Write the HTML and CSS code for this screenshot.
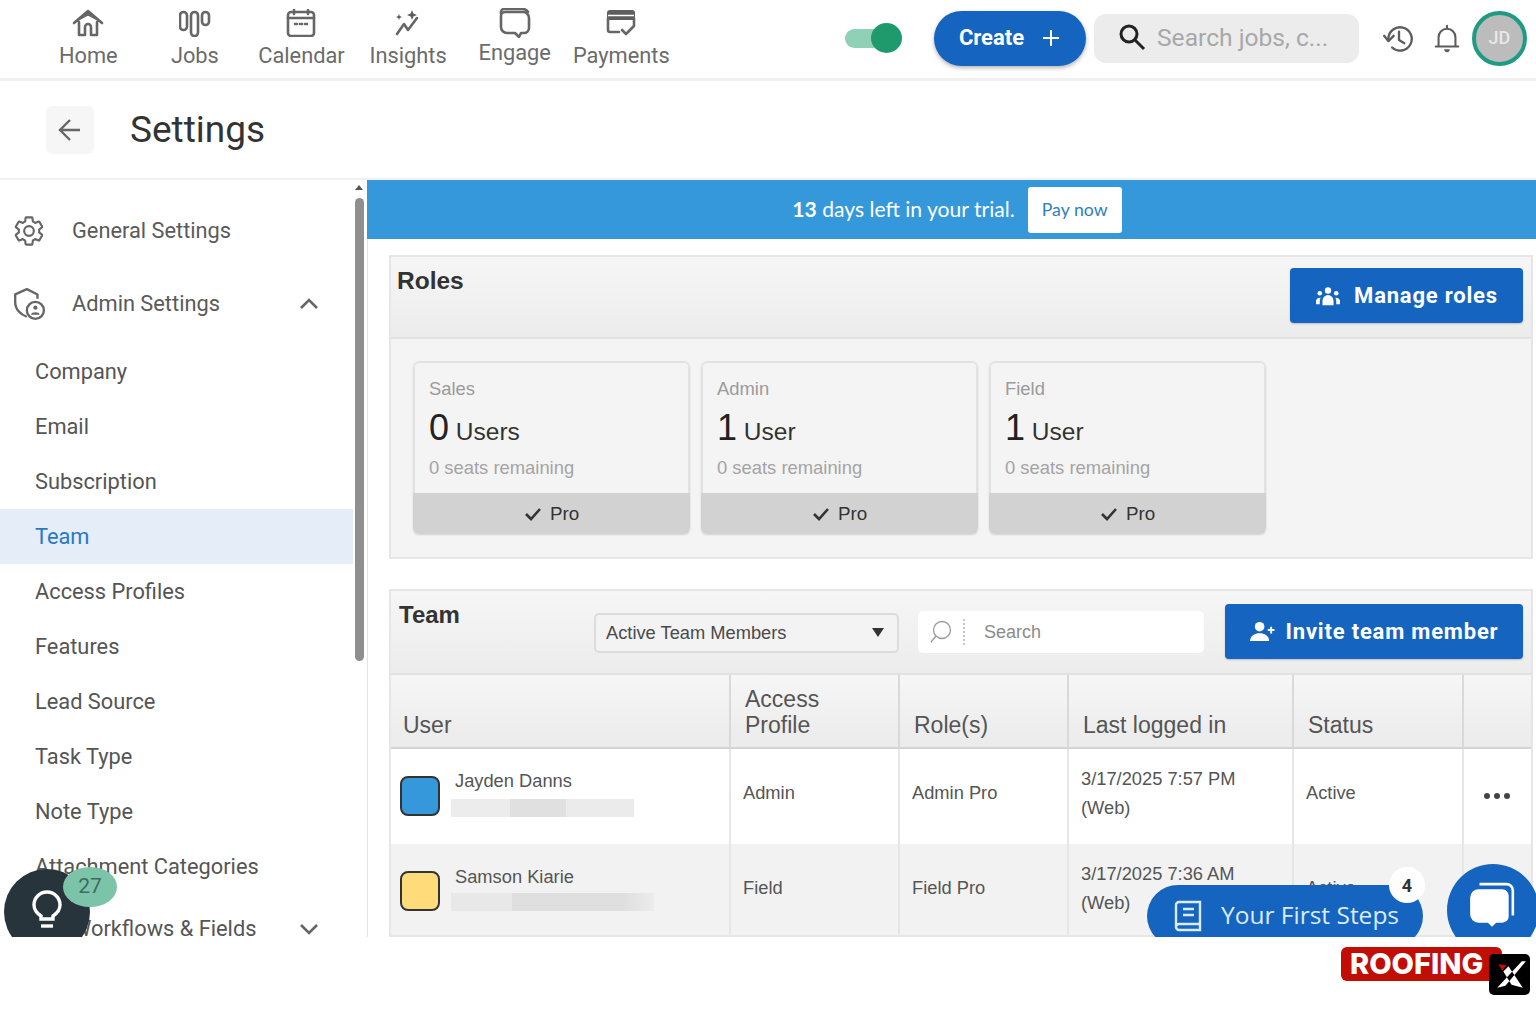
FILE: index.html
```html
<!DOCTYPE html>
<html lang="en">
<head>
<meta charset="utf-8">
<title>Settings</title>
<link rel="stylesheet" href="styles.css">
</head>
<body>
<div class="app">
  <header class="topbar">
    <nav class="nav">
      <a class="nav-item"><svg class="nav-icon" viewBox="0 0 32 28"><path d="M2 14 16 2l14 12M6 10.500 16 5l10 5.500M7 13v13h6v-8a3 3 0 0 1 6 0v8h6V13"/></svg><span>Home</span></a>
      <a class="nav-item"><svg class="nav-icon" viewBox="0 0 32 28"><rect x="1" y="3" width="7" height="18" rx="3.500"/><rect x="12" y="3" width="7" height="24" rx="3.500"/><rect x="23" y="3" width="7" height="13" rx="3.500"/></svg><span>Jobs</span></a>
      <a class="nav-item"><svg class="nav-icon" viewBox="0 0 32 28"><rect x="3" y="3" width="26" height="24" rx="3"/><path d="M3 9h26M9 1v4M23 1v4M10 15h2M15 15h2M20 15h2"/></svg><span>Calendar</span></a>
      <a class="nav-item"><svg class="nav-icon" viewBox="0 0 32 28"><path d="m5 25 7-10 4 6 9-12"/><path class="solid" d="m20 1 1.400 3.600L25 6l-3.600 1.400L20 11l-1.400-3.600L15 6l3.600-1.400zM7 5l.8 2L10 8l-2.200 1L7 11l-.8-2L4 8l2.200-1z"/></svg><span>Insights</span></a>
      <a class="nav-item nav-item-raised"><svg class="nav-icon nav-icon-tall" viewBox="0 0 34 30"><path d="M3 6V4a3 3 0 0 1 3-3h19a6 6 0 0 1 5 3"/><path d="M7 4h18a6 6 0 0 1 6 6v10a5 5 0 0 1-5 5h-3l-2 4-4-4H9a6 6 0 0 1-6-6V8a4 4 0 0 1 4-4z"/></svg><span>Engage</span></a>
      <a class="nav-item"><svg class="nav-icon" viewBox="0 0 32 28"><path class="solid" d="M5 1h22a3 3 0 0 1 3 3v7H2V4a3 3 0 0 1 3-3z"/><path d="M3 9v12a2 2 0 0 0 2 2h9M29 9v8M17 21l4 4 8-8"/><path class="gap" d="M3 6.500h26"/></svg><span>Payments</span></a>
    </nav>
    <div class="actions">
      <div class="toggle"><span class="toggle-knob"></span></div>
      <button class="create">Create<svg class="create-plus" viewBox="0 0 20 20"><path d="M10 2v16M2 10h16"/></svg></button>
      <div class="global-search">
        <svg class="search-glass" viewBox="0 0 28 28"><circle cx="11" cy="11" r="8"/><path d="m17 17 9 9"/></svg>
        <span>Search jobs, c...</span>
      </div>
      <svg class="tool-icon history" viewBox="0 0 32 32"><path d="M6 16a11 11 0 1 1 3.500 8"/><path d="M2 13l4 5 5-5M16 9v8l5 3"/></svg>
      <svg class="tool-icon bell" viewBox="0 0 32 32"><path d="M7 24V14a9 9 0 0 1 18 0v10zM4 24h24M16 2v3"/><path class="solid" d="M13 27h6a3 3 0 0 1-6 0z"/></svg>
      <div class="avatar">JD</div>
    </div>
  </header>

  <div class="titlebar">
    <button class="back"><svg viewBox="0 0 26 26"><path d="M23 13H4M13 3 3 13l10 10"/></svg></button>
    <h1>Settings</h1>
  </div>

  <div class="body">
    <aside class="sidebar">
      <div class="side-main">
        <svg class="side-icon" viewBox="0 0 24 24"><path d="M19.140 12.940c.04-.3.06-.61.06-.94 0-.32-.02-.64-.07-.94l2.030-1.580c.18-.14.23-.41.12-.61l-1.920-3.320c-.12-.22-.37-.29-.59-.22l-2.390.96c-.5-.38-1.030-.7-1.620-.94l-.36-2.540c-.04-.24-.24-.41-.48-.41h-3.840c-.24 0-.43.17-.47.41l-.36 2.540c-.59.24-1.130.57-1.620.94l-2.390-.96c-.22-.08-.47 0-.59.22L2.740 8.870c-.12.21-.08.47.12.61l2.030 1.580c-.05.3-.09.63-.09.94s.02.64.07.94l-2.030 1.580c-.18.14-.23.41-.12.61l1.920 3.320c.12.22.37.29.59.22l2.390-.96c.5.38 1.030.7 1.620.94l.36 2.540c.05.24.24.41.48.41h3.840c.24 0 .44-.17.47-.41l.36-2.540c.59-.24 1.130-.56 1.620-.94l2.390.96c.22.08.47 0 .59-.22l1.920-3.320c.12-.22.07-.47-.12-.61l-2.010-1.580z"/><circle cx="12" cy="12" r="3.400"/></svg>
        <span>General Settings</span>
      </div>
      <div class="side-main">
        <svg class="side-icon side-icon-admin" viewBox="0 0 32 32"><path d="M14 28C8 26 3 21 3 14V7l11-5 10 5v4"/><circle cx="22" cy="22" r="8"/><circle class="solid" cx="22" cy="19.500" r="2"/><path class="solid" d="M18 26c0-3 8-3 8 0z"/></svg>
        <span>Admin Settings</span>
        <svg class="chevron" viewBox="0 0 20 12"><path d="M2 10 10 2l8 8"/></svg>
      </div>
      <ul class="side-list">
        <li>Company</li>
        <li>Email</li>
        <li>Subscription</li>
        <li class="is-active">Team</li>
        <li>Access Profiles</li>
        <li>Features</li>
        <li>Lead Source</li>
        <li>Task Type</li>
        <li>Note Type</li>
        <li>Attachment Categories</li>
        <li class="side-group">Workflows &amp; Fields<svg class="chevron" viewBox="0 0 20 12"><path d="m2 2 8 8 8-8"/></svg></li>
      </ul>
    </aside>
    <div class="scrollbar"><span class="scroll-up"></span><span class="scroll-thumb"></span></div>

    <main class="content">
      <div class="trial"><span class="trial-text"><b>13</b> days left in your trial.</span><button class="pay">Pay now</button></div>
      <div class="panels">
        <section class="panel roles">
          <div class="panel-head">
            <h2>Roles</h2>
            <button class="primary manage"><svg viewBox="0 0 26 24"><circle cx="13" cy="6" r="3.500"/><path d="M7 22v-5a6 6 0 0 1 12 0v5z"/><circle cx="4" cy="9" r="2.500"/><path d="M0 21v-4a4 4 0 0 1 5-3 8 8 0 0 0-1 4v3z"/><circle cx="22" cy="9" r="2.500"/><path d="M26 21v-4a4 4 0 0 0-5-3 8 8 0 0 1 1 4v3z"/></svg>Manage roles</button>
          </div>
          <div class="role-cards">
            <article class="role-card">
              <div class="role-info">
                <div class="role-name">Sales</div>
                <div class="role-count"><span class="num">0</span> Users</div>
                <div class="role-seats">0 seats remaining</div>
              </div>
              <div class="role-plan"><svg viewBox="0 0 18 14"><path d="m2 7 5 5 9-10"/></svg>Pro</div>
            </article>
            <article class="role-card">
              <div class="role-info">
                <div class="role-name">Admin</div>
                <div class="role-count"><span class="num">1</span> User</div>
                <div class="role-seats">0 seats remaining</div>
              </div>
              <div class="role-plan"><svg viewBox="0 0 18 14"><path d="m2 7 5 5 9-10"/></svg>Pro</div>
            </article>
            <article class="role-card">
              <div class="role-info">
                <div class="role-name">Field</div>
                <div class="role-count"><span class="num">1</span> User</div>
                <div class="role-seats">0 seats remaining</div>
              </div>
              <div class="role-plan"><svg viewBox="0 0 18 14"><path d="m2 7 5 5 9-10"/></svg>Pro</div>
            </article>
          </div>
        </section>

        <section class="panel team">
          <div class="panel-head team-head">
            <h2>Team</h2>
            <div class="select">Active Team Members<span class="caret"></span></div>
            <div class="team-search">
              <svg viewBox="0 0 24 24"><circle cx="13" cy="10" r="8.500"/><path d="M7 16l-5 6"/></svg>
              <span class="divider"></span>
              <span class="team-search-field">Search</span>
            </div>
            <button class="primary invite"><svg viewBox="0 0 26 24"><circle cx="10" cy="7" r="5"/><path d="M0 22c0-11 20-11 20 0z"/><path d="M22 7v7M18.500 10.500h7" class="plus"/></svg>Invite team member</button>
          </div>
          <div class="table">
            <div class="row head">
              <div class="cell">User</div>
              <div class="cell">Access Profile</div>
              <div class="cell">Role(s)</div>
              <div class="cell">Last logged in</div>
              <div class="cell">Status</div>
              <div class="cell"></div>
            </div>
            <div class="row">
              <div class="cell user">
                <span class="swatch swatch-blue"></span>
                <div class="user-text"><div class="user-name">Jayden Danns</div><div class="blur blur-a"></div></div>
              </div>
              <div class="cell">Admin</div>
              <div class="cell">Admin Pro</div>
              <div class="cell">3/17/2025 7:57 PM<br>(Web)</div>
              <div class="cell">Active</div>
              <div class="cell more"><span></span><span></span><span></span></div>
            </div>
            <div class="row alt">
              <div class="cell user">
                <span class="swatch swatch-yellow"></span>
                <div class="user-text"><div class="user-name">Samson Kiarie</div><div class="blur blur-b"></div></div>
              </div>
              <div class="cell">Field</div>
              <div class="cell">Field Pro</div>
              <div class="cell">3/17/2025 7:36 AM<br>(Web)</div>
              <div class="cell">Active</div>
              <div class="cell more"><span></span><span></span><span></span></div>
            </div>
          </div>
        </section>
      </div>
    </main>
  </div>

  <div class="tips">
    <svg viewBox="0 0 32 44"><path d="M10 29v-3c-3-2-7-5-7-11a13 13 0 0 1 26 0c0 6-4 9-7 11v3z"/><path d="M10 36h12"/></svg>
  </div>
  <div class="tips-badge">27</div>
  <div class="steps">
    <svg viewBox="0 0 30 34"><path d="M3 28V5a3 3 0 0 1 3-3h21v28H6a3 3 0 0 1-3-3 3 3 0 0 1 3-3h21M10 9h11M10 15h11"/></svg>
    <span>Your First Steps</span>
  </div>
  <div class="steps-badge">4</div>
  <div class="chat">
    <svg viewBox="0 0 48 48"><path class="chat-back" d="M12 3h26a6 6 0 0 1 6 6v24"/><path class="solid" d="M11 8h23a6 6 0 0 1 6 6v20a6 6 0 0 1-6 6h-6l-4 4-4-4H11a8 8 0 0 1-8-8V16a8 8 0 0 1 8-8z"/></svg>
  </div>
</div>

<div class="mark">
  <span class="mark-text">ROOFING</span>
  <span class="mark-x"><svg viewBox="0 0 40 40"><path class="mark-red" d="m9 10 8 1-4 5z"/><path class="mark-white" d="M32 7 8 33l8-2 20-24zM14 17l5-5 14 21-11-3z"/></svg></span>
</div>
</body>
</html>
```
FILE: styles.css
```css
* { box-sizing: border-box; }
html, body { margin: 0; padding: 0; background: #fff; }
body { position: relative; width: 1536px; height: 1024px; overflow: hidden; font-family: Roboto, "Liberation Sans", sans-serif; color: #333; }
button { font-family: inherit; border: 0; padding: 0; }
h1, h2, ul { margin: 0; padding: 0; }

.app { position: relative; height: 937px; overflow: hidden; background: #fff; }

.topbar { display: flex; justify-content: space-between; height: 81px; border-bottom: 3px solid #f0f0f0; padding-left: 35px; }
.nav { display: flex; }
.nav-item { width: 106.6px; display: flex; flex-direction: column; align-items: center; padding-top: 9px; color: #6b6b6b; font-size: 21.800px; line-height: 26px; }
.nav-item span { margin-top: 6px; }
.nav-item-raised span { margin-top: 2px; }
.nav-item-raised { padding-top: 8px; }
.nav-icon { width: 32px; height: 28px; fill: none; stroke: #666; stroke-width: 2.600; stroke-linejoin: round; stroke-linecap: round; }
.nav-icon-tall { width: 34px; height: 30px; }
.nav-icon .solid { fill: #5e5e5e; stroke: none; }
.nav-icon .gap { stroke: #fff; stroke-width: 1.500; stroke-linecap: butt; }

.actions { display: flex; align-items: center; padding-right: 9px; padding-bottom: 1px; }
.toggle { position: relative; width: 45px; height: 19px; border-radius: 10px; background: #8fd1b6; margin-right: 44px; }
.toggle-knob { position: absolute; right: -12px; top: -6px; width: 31px; height: 30px; border-radius: 50%; background: #1f9a6c; }
.create { display: flex; align-items: center; justify-content: center; gap: 17px; width: 152px; height: 55px; padding-bottom: 2px; border-radius: 28px; background: #1464c0; color: #fff; font-size: 22px; font-weight: 700; box-shadow: 0 2px 4px rgba(0,0,0,.3); margin-right: 8px; }
.create-plus { width: 20px; height: 20px; fill: none; stroke: #fff; stroke-width: 2; }
.global-search { display: flex; align-items: center; gap: 11px; width: 265px; height: 49px; padding-bottom: 3px; border-radius: 12px; background: #ececec; padding-left: 24px; color: #a8a8a8; font-size: 24.600px; margin-right: 23px; }
.search-glass { width: 28px; height: 28px; fill: none; stroke: #222; stroke-width: 3; }
.tool-icon { fill: none; stroke: #5c5c5c; stroke-width: 2.200; stroke-linejoin: round; stroke-linecap: round; }
.tool-icon .solid { fill: #5c5c5c; stroke: none; }
.history { width: 34px; height: 34px; margin-right: 16px; }
.bell { width: 30px; height: 32px; margin-right: 10px; }
.avatar { display: flex; align-items: center; justify-content: center; width: 55px; height: 55px; padding-bottom: 2px; border-radius: 50%; border: 4px solid #1f9b84; background: #bcbcbc; color: #e8e8e8; font-size: 18px; font-weight: 500; }

.titlebar { display: flex; align-items: center; height: 99px; padding-left: 46px; border-bottom: 2px solid #f1f1f1; }
.back { display: flex; align-items: center; justify-content: center; width: 48px; height: 48px; border-radius: 6px; background: #f6f6f6; margin-right: 36px; }
.back svg { width: 26px; height: 26px; fill: none; stroke: #666; stroke-width: 2.400; }
h1 { font-size: 37px; font-weight: 400; color: #333; }

.body { display: flex; height: 757px; }
.sidebar { width: 353px; padding-top: 14px; flex: none; overflow: hidden; color: #555; }
.side-main { display: flex; align-items: center; position: relative; height: 73px; padding-left: 12px; font-size: 21.800px; color: #5a5a5a; }
.side-main span { margin-left: 26px; }
.side-icon { width: 34px; height: 34px; fill: none; stroke: #666; stroke-width: 1.500; stroke-linejoin: round; }
.side-icon-admin { stroke-width: 2.200; }
.side-icon .solid { fill: #666; stroke: none; }
.chevron { position: absolute; right: 34px; width: 20px; height: 12px; fill: none; stroke: #666; stroke-width: 2.600; }
.side-list { list-style: none; margin-top: 4px; }
.side-list li { position: relative; display: flex; align-items: center; height: 55px; padding-left: 35px; font-size: 21.800px; color: #555; }
.side-list li.is-active { background: #e4edf8; color: #2a78c4; }
.side-list li.side-group { margin-top: 6px; height: 57px; padding-left: 72px; }

.scrollbar { position: relative; width: 14px; flex: none; }
.scroll-up { position: absolute; left: 2px; top: 5px; border: 4px solid transparent; border-top: 0; border-bottom: 5px solid #555; }
.scroll-thumb { position: absolute; left: 2px; top: 18px; width: 9px; height: 463px; border-radius: 5px; background: #8f8f8f; }

.content { display: flex; flex-direction: column; flex: 1; min-width: 0; font-family: "Liberation Sans", Arial, sans-serif; }
.trial { display: flex; flex: none; align-items: center; justify-content: center; gap: 13px; height: 59px; background: #3498db; color: #fff; padding-left: 11px; }
.trial-text { font-family: Lato, "Open Sans", sans-serif; font-size: 21.100px; margin-bottom: 2px; }
.pay { width: 94px; height: 46px; border-radius: 3px; background: #fff; color: #2f7ec0; font-family: Lato, "Open Sans", sans-serif; font-size: 17.700px; }

.panels { display: flex; flex: 1; min-height: 0; flex-direction: column; gap: 30px; padding: 16px 3px 0 21px; border-left: 1px solid #e4e4e4; }
.panel { background: #f4f4f4; border: 2px solid #e6e6e6; }
.panel-head { display: flex; height: 82px; background: linear-gradient(#f6f6f6, #ececec); border-bottom: 2px solid #e2e2e2; position: relative; }
.panel-head h2 { font-size: 24.500px; font-weight: 700; color: #333; padding: 10px 0 0 6px; }
.primary { display: flex; align-items: center; justify-content: center; background: #1464c0; color: #fff; border-radius: 4px; font-family: Roboto, sans-serif; font-size: 22px; font-weight: 700; letter-spacing: .8px; box-shadow: 0 1px 2px rgba(0,0,0,.2); }
.primary svg { fill: #fff; stroke: none; }
.manage { position: absolute; right: 8px; top: 11px; width: 233px; height: 55px; gap: 13px; }
.manage svg { width: 26px; height: 22px; }
.invite { position: absolute; right: 8px; top: 13px; width: 298px; height: 55px; gap: 11px; }
.invite svg { width: 25px; height: 23px; }
.invite .plus { fill: none; stroke: #fff; stroke-width: 2; }

.roles { height: 304px; flex: none; }
.role-cards { display: flex; gap: 11px; padding: 22px 0 0 22px; }
.role-card { display: flex; flex-direction: column; width: 277px; height: 173px; border-radius: 6px; overflow: hidden; box-shadow: 0 1px 2px rgba(0,0,0,.14); }
.role-info { flex: 1; padding: 14px 14px 0; border: 2px solid #e2e2e2; border-bottom: 0; border-radius: 6px 6px 0 0; }
.role-name { font-size: 18.400px; line-height: 24px; color: #9b9b9b; }
.role-count { font-size: 24.500px; line-height: 42px; margin-top: 6px; color: #333; }
.role-count .num { font-size: 36px; color: #222; }
.role-seats { font-size: 18.400px; line-height: 24px; margin-top: 3px; color: #a4a4a4; }
.role-plan { display: flex; align-items: center; justify-content: center; gap: 8px; height: 41px; background: #d2d2d2; font-size: 18.800px; color: #333; }
.role-plan svg { width: 18px; height: 14px; fill: none; stroke: #333; stroke-width: 2.600; }

.team { flex: 1; min-height: 0; overflow: hidden; }
.team-head { height: 84px; padding-left: 8px; }
.team-head h2 { font-size: 24px; padding: 10px 0 0 0; width: 195px; flex: none; }
.select { position: relative; display: flex; align-items: center; width: 305px; height: 40px; margin-top: 22px; padding-left: 10px; border: 2px solid #dcdcdc; border-radius: 5px; background: #f3f3f3; font-size: 18.300px; color: #4a4a4a; flex: none; }
.caret { position: absolute; right: 13px; top: 13px; border: 6px solid transparent; border-top: 9px solid #333; border-bottom: 0; }
.team-search { display: flex; align-items: center; width: 286px; height: 42px; margin: 20px 0 0 19px; background: #fff; border-radius: 5px; overflow: hidden; flex: none; }
.team-search svg { width: 24px; height: 24px; margin-left: 11px; fill: none; stroke: #9a9a9a; stroke-width: 1.300; }
.divider { width: 0; height: 26px; margin-left: 10px; border-left: 2px dotted #c4c4c4; }
.team-search-field { margin-left: 19px; font-size: 18px; color: #8b8b8b; }

.table { display: flex; flex-direction: column; }
.row { display: grid; flex: none; grid-template-columns: 340px 169px 169px 225px 170px 1fr; height: 95px; background: #fff; font-size: 18.300px; color: #555; }
.row.alt { background: #f2f2f2; }
.row.head { height: 74px; background: linear-gradient(#f6f6f6, #ebebeb); border-bottom: 2px solid #d4d4d4; font-size: 23px; color: #555; }
.cell { display: flex; align-items: center; padding-left: 12px; padding-bottom: 8px; line-height: 29px; border-right: 2px solid #e6e6e6; }
.head .cell { align-items: flex-end; padding: 0 20px 9px 14px; line-height: 26px; border-right-color: #d9d9d9; }
.head .cell:first-child { padding-left: 12px; }
.cell:last-child { border-right: 0; }
.row:not(.head) .cell:nth-child(4) { display: block; padding-top: 15px; }
.user { gap: 11px; padding-left: 9px; padding-bottom: 2px; }
.swatch { width: 40px; height: 40px; border-radius: 8px; border: 2px solid #333; flex: none; }
.swatch-blue { background: #3498db; }
.swatch-yellow { background: #ffdb7a; }
.user-text { margin-top: -6px; }
.user-name { font-size: 18.300px; line-height: 24px; padding-left: 4px; margin-bottom: 6px; }
.blur { height: 18px; }
.blur-a { width: 183px; background: linear-gradient(90deg, #ececec 0 32%, #e0e0e0 32% 63%, #ebebeb 63%); }
.blur-b { width: 203px; margin-top: -2px; background: linear-gradient(90deg, #e8e8e8 0 30%, #dfdfdf 30% 85%, #ececec 100%); }
.more { gap: 4px; padding-left: 20px; padding-bottom: 2px; }
.more span { width: 6px; height: 6px; border-radius: 50%; background: #444; }

.tips { position: absolute; left: 4px; top: 869px; width: 86px; height: 86px; border-radius: 50%; background: #27343b; display: flex; justify-content: center; padding-top: 21px; }
.tips svg { width: 32px; height: 44px; fill: none; stroke: #fff; stroke-width: 3.400; }
.tips-badge { position: absolute; left: 63px; top: 867px; width: 54px; height: 40px; padding-bottom: 2px; border-radius: 50%; background: #7bc4a9; color: #3c6d62; font-size: 21px; display: flex; align-items: center; justify-content: center; }
.steps { position: absolute; left: 1147px; top: 885px; width: 276px; height: 62px; border-radius: 31px; background: #1464c0; color: #dcebf9; display: flex; align-items: flex-start; gap: 18px; padding: 14px 0 0 26px; font-family: "Open Sans", sans-serif; font-size: 24.500px; line-height: 32px; }
.steps svg { width: 30px; height: 34px; margin-top: 1px; fill: none; stroke: #dcebf9; stroke-width: 2.400; }
.steps-badge { position: absolute; left: 1389px; top: 867px; width: 36px; height: 36px; border-radius: 50%; background: #fff; color: #333; font-size: 18px; font-weight: 700; display: flex; align-items: center; justify-content: center; }
.chat { position: absolute; left: 1447px; top: 864px; width: 92px; height: 92px; border-radius: 50%; background: #1464c0; padding: 17px 0 0 20px; }
.chat svg { display: block; width: 50px; height: 50px; }
.chat .solid { fill: #fff; }
.chat-back { fill: none; stroke: #fff; stroke-width: 2.500; }

.mark { position: absolute; left: 1341px; top: 947px; width: 189px; height: 48px; }
.mark-text { display: block; width: 161px; height: 34px; border-radius: 6px; background: #c00d05; color: #fff; font-family: Inter, "Open Sans", sans-serif; font-size: 29px; font-weight: 800; line-height: 34px; padding-left: 9px; }
.mark-x { position: absolute; left: 148px; top: 7px; width: 41px; height: 41px; border-radius: 5px; background: #000; }
.mark-x svg { display: block; width: 41px; height: 41px; }
.mark-red { fill: #c00d05; }
.mark-white { fill: #fff; }
```
